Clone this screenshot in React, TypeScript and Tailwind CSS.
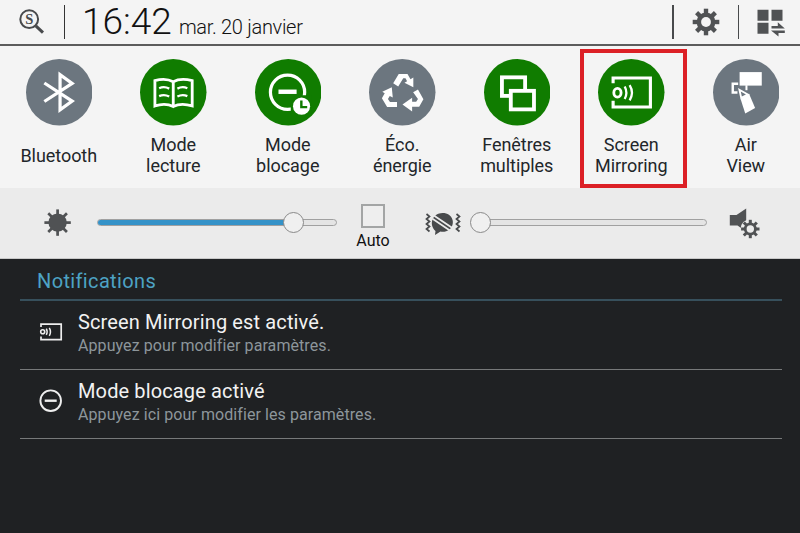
import type { ReactNode } from "react";

const GEAR_ANGLES = [0, 45, 90, 135, 180, 225, 270, 315];

interface GearProps {
  cx: number;
  cy: number;
  r: number;
  outer: number;
  hole: number;
  tooth: number;
  holeFill: string;
}

const Gear = ({ cx, cy, r, outer, hole, tooth, holeFill }: GearProps) => (
  <g fill="#505254">
    {GEAR_ANGLES.map((angle) => (
      <rect
        key={angle}
        x={cx - tooth / 2}
        y={cy - outer}
        width={tooth}
        height={outer}
        transform={`rotate(${angle} ${cx} ${cy})`}
      />
    ))}
    <circle cx={cx} cy={cy} r={r} />
    {hole > 0 && <circle cx={cx} cy={cy} r={hole} fill={holeFill} />}
  </g>
);

const BluetoothIcon = () => (
  <path d="M18.2 23.8 45.8 41.8 33.8 50.5V15.5L45.8 24.2 18.2 42.2" fill="none" stroke="#fff" strokeWidth="3.2" />
);

const BookIcon = () => (
  <g fill="none" stroke="#fff">
    <path
      d="M33 22.5C28 19.8 20 20 14.8 21.4V46.6C21 44.5 28 44.6 33 47.2 38 44.6 45 44.5 51.8 46.6V21.4C46 20 38 19.8 33 22.5ZM33 22.5V47"
      strokeWidth="2.8"
    />
    <path
      d="M19 29Q24 26.8 29 29.4M19 36.8Q24 34.6 29 37.2M37.1 29.4Q42 26.8 47 29M37.1 37.2Q42 34.6 47 36.8"
      strokeWidth="2.3"
    />
  </g>
);

const BlockingIcon = () => (
  <g>
    <circle cx="32.3" cy="33" r="17" fill="none" stroke="#fff" strokeWidth="3.2" />
    <path d="M23.3 32.5H41.3" stroke="#fff" strokeWidth="4.4" />
    <path d="M35.5 55V43L42 36H56V55Z" fill="#107c00" />
    <circle cx="46.2" cy="46.8" r="8.5" fill="#fff" />
    <path d="M46 41.2V47.8H51.8" fill="none" stroke="#107c00" strokeWidth="2.4" />
  </g>
);

const EcoIcon = () => (
  <g fill="#fff">
    <path d="M24 24 29.5 14.8H38.2L41.2 20 44 18.4V28L35.2 23.6 37.8 22 36.2 19.2H34L29 27.2Z" />
    <path d="M43.8 33 48.6 30.2 54 40 49.8 47.4H42.8V52L33.2 45.2 42.8 38.4V42.4H46.8L48.6 39.8Z" />
    <path d="M27.8 42.6V47.6H18L12.8 39 15.6 34 13.2 32.4 22.6 28 23.6 38.2 20.6 36.8 18.8 39.6 20.8 42.6Z" />
  </g>
);

const WindowsIcon = () => (
  <g stroke="#fff" strokeWidth="3.8">
    <rect x="17.8" y="18.2" width="23" height="18.4" fill="none" />
    <rect x="26.6" y="31.6" width="23" height="18.4" fill="#107c00" />
  </g>
);

const MirroringIcon = () => (
  <g fill="none" stroke="#fff">
    <path d="M15 24V18.9H52V47.6H15V41.5" strokeWidth="3.1" />
    <ellipse cx="19.3" cy="33.5" rx="3.6" ry="4.3" strokeWidth="2.8" />
    <path d="M26.5 27.3Q29.8 33.5 26.5 39.7M31.4 26Q36 33.5 31.4 41" strokeWidth="2.3" />
  </g>
);

const AirViewIcon = () => (
  <g fill="#fff">
    <rect x="26.4" y="13" width="22" height="13.4" />
    <path d="M25 24.6H19.6V33.2H24.3" fill="none" stroke="#fff" strokeWidth="2.4" />
    <path d="M26.2 30.5 28 38.5 34.5 35.2Z" fill="none" stroke="#fff" strokeWidth="1.8" />
    <path d="M33.2 26V31" stroke="#fff" strokeWidth="2" />
    <path d="M27.3 39.5 35.8 34.6 41.8 48.6 32 54.2Z" />
  </g>
);

interface TileProps {
  lines: string[];
  active?: boolean;
  highlighted?: boolean;
  icon: ReactNode;
}

const Tile = ({ lines, active, highlighted, icon }: TileProps) => (
  <div className="relative flex h-full w-[114.5px] shrink-0 flex-col items-center pt-[13px]">
    <svg width="66.5" height="66.5" viewBox="0 0 66 66" className="shrink-0">
      <circle cx="33" cy="33" r="33" fill={active ? "#107c00" : "#6c767f"} />
      {icon}
    </svg>
    <div className="flex h-[59px] flex-col items-center justify-center whitespace-nowrap text-[18px] leading-[21px] tracking-[-0.05px] text-[#22262a]">
      {lines.map((line) => (
        <span key={line}>{line}</span>
      ))}
    </div>
    {highlighted && (
      <div className="absolute left-[5.5px] top-[3px] h-[139px] w-[107px] border-[4px] border-[#dc2026]" />
    )}
  </div>
);

interface SliderProps {
  width: number;
  fill: number;
}

const Slider = ({ width, fill }: SliderProps) => (
  <div className="relative -mt-px flex h-[22px] items-center" style={{ width }}>
    <div className="h-[7px] w-full overflow-hidden rounded-full border border-[#a0a0a0] bg-[#e4e4e4]">
      <div className="-mt-px h-[7px] bg-[#3492c8]" style={{ width: fill }} />
    </div>
    <div
      className="absolute top-[0.5px] size-[21px] rounded-full border border-[#8a8a8a] bg-[#f0f0f0]"
      style={{ left: fill - 10.5 }}
    />
  </div>
);

interface NotificationProps {
  title: string;
  text: string;
  icon: ReactNode;
}

const Notification = ({ title, text, icon }: NotificationProps) => (
  <div className="ml-5 mr-[18px] flex h-[69px] border-b border-[#77797a] pl-[18px]">
    <div className="flex w-[40px] items-center pb-[6px]">{icon}</div>
    <div className="flex flex-col whitespace-nowrap pt-[8px]">
      <span className="text-[20px] leading-[26px] tracking-[0.13px] text-[#f2f2f2]">{title}</span>
      <span className="text-[16px] leading-[22px] tracking-[0.08px] text-[#8d969b]">{text}</span>
    </div>
  </div>
);

const App = () => {
  return (
    <div className="flex h-[533px] w-[800px] flex-col overflow-hidden bg-[#1f2123] font-['Roboto',sans-serif]">
      <header className="flex h-[46px] shrink-0 border-b-2 border-[#5c5c5c] bg-[#f4f4f4]">
        <div className="flex w-[64px] pl-[19px] pt-[9px]">
          <svg width="26" height="26" viewBox="0 0 26 26">
            <circle cx="10.2" cy="10.2" r="8.9" fill="none" stroke="#484a4c" strokeWidth="2" />
            <path d="M16.8 16.8 24 23.6" stroke="#484a4c" strokeWidth="3" />
            <text x="10.2" y="15" textAnchor="middle" fontSize="14.5" fontWeight="700" fontFamily="Liberation Serif" fill="#484a4c">
              S
            </text>
          </svg>
        </div>
        <div className="mt-[5px] h-[34px] w-px bg-[#333]" />
        <div className="flex items-baseline whitespace-nowrap pl-[17px] text-[#111]">
          <span className="text-[37px] font-light leading-[44px]">16:42</span>
          <span className="ml-[7px] text-[20px] font-light tracking-[-0.3px]">mar. 20 janvier</span>
        </div>
        <div className="ml-auto flex">
          <div className="mt-[5px] h-[34px] w-[1.5px] bg-[#484a4c]" />
          <div className="flex w-[64px] justify-center pt-[8px]">
            <svg width="28" height="28" viewBox="0 0 28 28">
              <Gear cx={14} cy={14} r={9.4} outer={13.3} hole={4.9} tooth={4.4} holeFill="#f4f4f4" />
            </svg>
          </div>
          <div className="mt-[5px] h-[34px] w-[1.5px] bg-[#484a4c]" />
          <div className="w-[61px] pl-[18px] pt-[9px]">
            <svg width="28" height="28" viewBox="0 0 28 28" fill="#505254">
              <path d="M0.5 0.8H11.5V11.8H0.5ZM14.5 0.8H25.5V11.8H14.5ZM0.5 13.8H11.5V24.8H0.5Z" />
              <path d="M14.5 19.4V16.9H20.8V13.2L27.8 19.4ZM27.8 21.6V24H21.5V27.6L14 21.6Z" />
            </svg>
          </div>
        </div>
      </header>

      <section className="flex h-[142px] shrink-0 bg-[#f4f4f4] pl-[1.5px]">
        <Tile lines={["Bluetooth"]} icon={<BluetoothIcon />} />
        <Tile lines={["Mode", "lecture"]} active icon={<BookIcon />} />
        <Tile lines={["Mode", "blocage"]} active icon={<BlockingIcon />} />
        <Tile lines={["Éco.", "énergie"]} icon={<EcoIcon />} />
        <Tile lines={["Fenêtres", "multiples"]} active icon={<WindowsIcon />} />
        <Tile lines={["Screen", "Mirroring"]} active highlighted icon={<MirroringIcon />} />
        <Tile lines={["Air", "View"]} icon={<AirViewIcon />} />
      </section>

      <section className="flex h-[71px] shrink-0 items-center border-b border-[#c8c8c8] bg-[#ebebeb] pl-[44px]">
        <svg width="28" height="28" viewBox="0 0 28 28" className="mr-[25px]">
          <Gear cx={13.6} cy={13.6} r={9.2} outer={13.2} hole={0} tooth={2.7} holeFill="none" />
        </svg>
        <Slider width={240} fill={196.5} />
        <div className="ml-[14px] flex w-[44px] flex-col items-center pt-[8px]">
          <div className="size-6 border-2 border-[#a3a5a5] bg-[#eeeeee]" />
          <span className="mt-[4px] text-[16px] leading-[18px] text-[#111]">Auto</span>
        </div>
        <svg width="36" height="26" viewBox="0 0 36 26" className="ml-[30px]">
          <path
            d="M10.5 21C3 14 8 3 17.5 3 28 3 31 14 24.5 19.5 21.5 22 17.5 22 15.5 21.5L10 25Z"
            fill="#484a4c"
          />
          <path d="M7 4.2 28.5 18.8M7.5 8.8 26 21.2" stroke="#ebebeb" strokeWidth="1.7" />
          <path
            d="M1.5 4 4.5 6.5 1.5 9 4.5 11.5 1.5 14 4.5 16.5 1.5 19 4.5 21.5M31.5 4 34.5 6.5 31.5 9 34.5 11.5 31.5 14 34.5 16.5 31.5 19 34.5 21.5"
            fill="none"
            stroke="#484a4c"
            strokeWidth="1.7"
          />
        </svg>
        <div className="ml-[10px]">
          <Slider width={236} fill={9.5} />
        </div>
        <svg width="32" height="32" viewBox="0 0 32 32" className="ml-[22px]">
          <path d="M0.8 8H7.5L17.2 1.5V18.5L12 21 8.5 18.5H0.8Z" fill="#505254" />
          <circle cx="21.3" cy="22" r="9.8" fill="#ebebeb" />
          <Gear cx={21.3} cy={22} r={6.5} outer={9.2} hole={3.7} tooth={3} holeFill="#ebebeb" />
        </svg>
      </section>

      <section className="flex flex-col">
        <h2 className="ml-5 mr-[18px] h-[42px] border-b-2 border-[#37505c] pl-[17px] pt-[9px] text-[20px] leading-[26px] tracking-[0.36px] text-[#4da3c4]">
          Notifications
        </h2>
        <Notification
          title="Screen Mirroring est activé."
          text="Appuyez pour modifier paramètres."
          icon={
            <svg width="26" height="20" viewBox="0 0 26 20" fill="none" stroke="#eee">
              <path d="M3 5V2.2H23.2V17.6H3V14.5" strokeWidth="1.7" />
              <circle cx="4.7" cy="9.8" r="2" strokeWidth="1.6" />
              <path d="M8.3 6.7Q10 9.8 8.3 12.9M11.3 5.8Q13.6 9.8 11.3 13.8" strokeWidth="1.5" />
            </svg>
          }
        />
        <Notification
          title="Mode blocage activé"
          text="Appuyez ici pour modifier les paramètres."
          icon={
            <svg width="26" height="26" viewBox="0 0 26 26" fill="none" stroke="#eee">
              <circle cx="12.7" cy="12.7" r="10.3" strokeWidth="1.9" />
              <path d="M6.7 12.7H18.7" strokeWidth="2.4" />
            </svg>
          }
        />
      </section>
    </div>
  );
};

export default App;
